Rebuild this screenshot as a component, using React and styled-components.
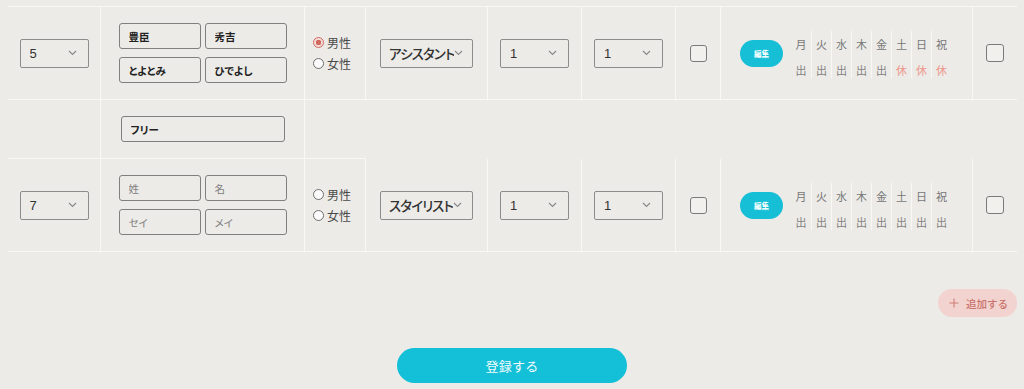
import styled, { createGlobalStyle } from "styled-components";

const GlobalStyle = createGlobalStyle`
  html, body {
    margin: 0;
    padding: 0;
    background: #ecebe7;
  }
  body {
    font-family: "Noto Sans CJK JP", "Noto Sans", sans-serif;
    color: #333;
  }
`;

const LINE = "#f9f8f5";
const COLS = "93px 204px 61px 122px 94px 94px 45px 252px 44px";

// data
const rows = [
  {
    no: "5",
    names: ["豊臣", "秀吉", "とよとみ", "ひでよし"],
    gender: "male",
    role: "アシスタント",
    a: "1",
    b: "1",
    days: ["出", "出", "出", "出", "出", "休", "休", "休"],
  },
  {
    free: true,
  },
  {
    no: "7",
    names: [],
    placeholders: ["姓", "名", "セイ", "メイ"],
    gender: null,
    role: "スタイリスト",
    a: "1",
    b: "1",
    days: ["出", "出", "出", "出", "出", "出", "出", "出"],
  },
];

const weekdays = ["月", "火", "水", "木", "金", "土", "日", "祝"];

const Chevron = () => (
  <ChevronIcon width="9" height="6" viewBox="0 0 9 6">
    <polyline
      points="1,1 4.5,4.5 8,1"
      fill="none"
      stroke="#888"
      strokeWidth="1.1"
    />
  </ChevronIcon>
);

const SelectBox = ({ value, wide }) => (
  <Select $wide={wide}>
    <SelectText $wide={wide}>{value}</SelectText>
    <Chevron />
  </Select>
);

const Radio = ({ checked, label }) => (
  <RadioLabel>
    <RadioDot $checked={checked} />
    {label}
  </RadioLabel>
);

const DataRow = ({ row }) => (
  <Row>
    <Cell>
      <SelectBox value={row.no} />
    </Cell>
    <Cell>
      <NameGrid>
        {[0, 1, 2, 3].map((i) => (
          <NameInput
            key={i}
            readOnly
            value={row.names[i] || ""}
            placeholder={row.placeholders ? row.placeholders[i] : ""}
          />
        ))}
      </NameGrid>
    </Cell>
    <Cell $align="start">
      <Gender>
        <Radio checked={row.gender === "male"} label="男性" />
        <Radio checked={row.gender === "female"} label="女性" />
      </Gender>
    </Cell>
    <Cell>
      <SelectBox value={row.role} wide />
    </Cell>
    <Cell>
      <SelectBox value={row.a} />
    </Cell>
    <Cell>
      <SelectBox value={row.b} />
    </Cell>
    <Cell>
      <Check />
    </Cell>
    <Cell>
      <Schedule>
        <EditButton>編集</EditButton>
        <Days>
          {weekdays.map((d, i) => (
            <Day key={d}>
              <DayLabel>{d}</DayLabel>
              <DayValue $off={row.days[i] === "休"}>{row.days[i]}</DayValue>
            </Day>
          ))}
        </Days>
      </Schedule>
    </Cell>
    <Cell $last>
      <Check $big />
    </Cell>
  </Row>
);

const FreeRowBlock = () => (
  <FreeRow>
    <FreeCell $bottom $right />
    <FreeCell $bottom $right>
      <FreeInput readOnly value="フリー" />
    </FreeCell>
    <FreeCell $bottom />
    <FreeCell />
  </FreeRow>
);

export default function App() {
  return (
    <>
      <GlobalStyle />
      <Page>
        <Table>
          {rows.map((row, i) =>
            row.free ? <FreeRowBlock key={i} /> : <DataRow key={i} row={row} />
          )}
        </Table>
        <AddBar>
          <AddButton>
            <svg width="10" height="10" viewBox="0 0 10 10">
              <path d="M5 0.5V9.5M0.5 5H9.5" stroke="#cf7e77" strokeWidth="1.1" />
            </svg>
            追加する
          </AddButton>
        </AddBar>
        <Submit>
          <SubmitButton>登録する</SubmitButton>
        </Submit>
      </Page>
    </>
  );
}

const Page = styled.div`
  padding: 6px 7px 0 8px;
  height: 389px;
  box-sizing: border-box;
  overflow: hidden;
`;

const Table = styled.div`
  border-top: 1px solid ${LINE};
`;

const Row = styled.div`
  display: grid;
  grid-template-columns: ${COLS};
  height: 93px;
  border-bottom: 1px solid ${LINE};
  box-sizing: border-box;
`;

const Cell = styled.div`
  display: flex;
  align-items: center;
  justify-content: ${(p) => (p.$align === "start" ? "flex-start" : "center")};
  padding-left: ${(p) => (p.$align === "start" ? "8px" : "0")};
  border-right: ${(p) => (p.$last ? "none" : `1px solid ${LINE}`)};
  box-sizing: border-box;
`;

const FreeRow = styled.div`
  display: grid;
  grid-template-columns: 93px 204px 61px 1fr;
  height: 59px;
`;

const FreeCell = styled.div`
  display: flex;
  align-items: center;
  justify-content: center;
  box-sizing: border-box;
  border-right: ${(p) => (p.$right ? `1px solid ${LINE}` : "none")};
  border-bottom: ${(p) => (p.$bottom ? `1px solid ${LINE}` : "none")};
`;

const Select = styled.div`
  width: ${(p) => (p.$wide ? "93px" : "69px")};
  height: 29px;
  box-sizing: border-box;
  border: 1px solid #8c8c8c;
  border-radius: 2px;
  display: flex;
  align-items: center;
  justify-content: ${(p) => (p.$wide ? "flex-start" : "space-between")};
  padding: 0 ${(p) => (p.$wide ? "6px" : "11px")} 0 ${(p) => (p.$wide ? "8px" : "9px")};
  overflow: hidden;
`;

const ChevronIcon = styled.svg`
  flex-shrink: 0;
`;

const SelectText = styled.span`
  font-family: ${(p) =>
    p.$wide
      ? `"Noto Sans CJK JP", sans-serif`
      : `"Liberation Sans", "Noto Sans CJK JP", sans-serif`};
  font-size: ${(p) => (p.$wide ? "13.5px" : "13px")};
  font-weight: ${(p) => (p.$wide ? 500 : 400)};
  font-feature-settings: "palt";
  letter-spacing: ${(p) => (p.$wide ? "-0.9px" : "0")};
  color: #333;
  white-space: nowrap;
  overflow: hidden;
  flex-shrink: 1;
`;

const NameGrid = styled.div`
  display: grid;
  grid-template-columns: 82px 82px;
  column-gap: 4px;
  row-gap: 8px;
`;

const NameInput = styled.input`
  width: 82px;
  height: 26px;
  box-sizing: border-box;
  border: 1.5px solid #7f7f7f;
  border-radius: 3px;
  background: transparent;
  padding: 0 9px;
  font-family: "Noto Sans CJK JP", sans-serif;
  font-size: 10.5px;
  font-weight: 700;
  font-feature-settings: "palt";
  color: #222;
  outline: none;

  &::placeholder {
    color: #808080;
    font-weight: 400;
  }
`;

const FreeInput = styled(NameInput)`
  width: 164px;
`;

const Gender = styled.div`
  display: flex;
  flex-direction: column;
  gap: 4px;
`;

const RadioLabel = styled.label`
  display: flex;
  align-items: center;
  gap: 3px;
  font-size: 12px;
  line-height: 17px;
  color: #4a4a4a;
`;

const RadioDot = styled.span`
  width: 11px;
  height: 11px;
  box-sizing: border-box;
  border-radius: 50%;
  border: 1px solid ${(p) => (p.$checked ? "#d2695e" : "#6f6f6f")};
  background: ${(p) =>
    p.$checked
      ? "radial-gradient(circle, #d2695e 0 2.6px, #f6dcd8 3px)"
      : "#fbfbfb"};
`;

const Check = styled.span`
  width: ${(p) => (p.$big ? "18px" : "17px")};
  height: ${(p) => (p.$big ? "18px" : "17px")};
  box-sizing: border-box;
  border: 1.5px solid #7a7a7a;
  border-radius: 3px;
  background: #f1f0ed;
`;

const Schedule = styled.div`
  display: flex;
  align-items: center;
  gap: 8px;
  margin-right: 2px;
`;

const EditButton = styled.button`
  width: 43px;
  height: 27px;
  border: none;
  border-radius: 14px;
  background: #16bfd6;
  color: #fff;
  font-family: "Noto Sans CJK JP", sans-serif;
  font-size: 7.5px;
  font-weight: 700;
  padding: 0;
`;

const Days = styled.div`
  display: flex;
  margin-top: 2px;
`;

const Day = styled.div`
  width: 20px;
  height: 47px;
  box-sizing: border-box;
  display: flex;
  flex-direction: column;
  align-items: center;
  padding-top: 5px;
  gap: 10px;
  & + & {
    border-left: 1px solid ${LINE};
  }
`;

const DayLabel = styled.span`
  font-size: 11px;
  line-height: 16px;
  color: #777;
`;

const DayValue = styled.span`
  font-size: 11px;
  line-height: 16px;
  color: ${(p) => (p.$off ? "#ef978c" : "#828282")};
`;

const AddBar = styled.div`
  display: flex;
  justify-content: flex-end;
  margin-top: 37px;
`;

const AddButton = styled.button`
  width: 79px;
  height: 28px;
  border: none;
  border-radius: 14px;
  background: #f2d3cf;
  color: #c9726b;
  font-family: "Noto Sans CJK JP", sans-serif;
  font-size: 10.5px;
  font-weight: 500;
  display: flex;
  align-items: center;
  justify-content: center;
  gap: 7px;
  padding: 0 0 0 2px;
`;

const Submit = styled.div`
  display: flex;
  justify-content: center;
  margin-top: 31px;
  padding-right: 1px;
`;

const SubmitButton = styled.button`
  width: 230px;
  height: 35px;
  border: none;
  border-radius: 18px;
  background: #13c0d8;
  color: #f4fbfc;
  font-family: "Noto Sans CJK JP", sans-serif;
  font-size: 13px;
  letter-spacing: 0.3px;
`;
